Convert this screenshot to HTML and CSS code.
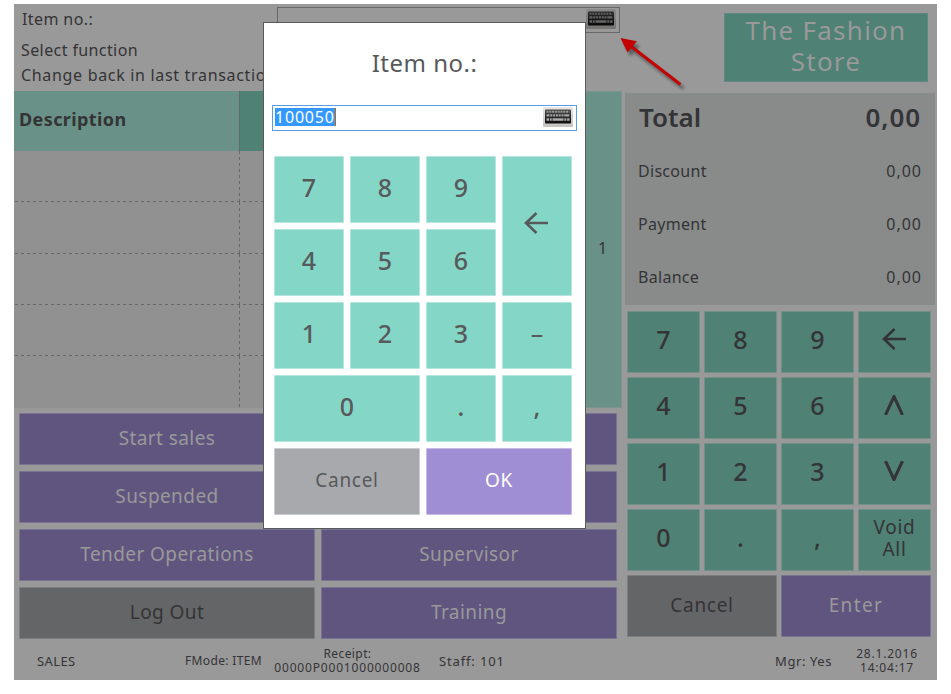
FILE: index.html
```
<!DOCTYPE html>
<html lang="en">
<head>
<meta charset="utf-8">
<title>POS</title>
<link rel="stylesheet" href="styles.css">
</head>
<body>
<svg class="defs" width="0" height="0">
  <defs>
    <linearGradient id="plate" x1="0" y1="0" x2="0" y2="1"><stop offset="0" stop-color="#e6e5e3"/><stop offset="1" stop-color="#c4c2bf"/></linearGradient>
    <linearGradient id="deck" x1="0" y1="0" x2="0" y2="1"><stop offset="0" stop-color="#4a4a4a"/><stop offset="1" stop-color="#0c0c0c"/></linearGradient>
    <symbol id="keyboard" viewBox="0 0 30 20">
      <rect width="30" height="20" rx="1.5" fill="url(#plate)"/>
      <rect x="2" y="2.500" width="26" height="14" rx="1" fill="url(#deck)"/>
      <path d="M3.500 4.700h23" stroke="#9a9a9a" stroke-width="2" stroke-dasharray="2 .8"/>
      <path d="M3.500 8.400h23" stroke="#a4a4a4" stroke-width="2.200" stroke-dasharray="3 .8 2 .8 2 .8 2 .8 2 .8 2 .8 5"/>
      <path d="M3.500 12.500h23" stroke="#a9a9a9" stroke-width="2.400" stroke-dasharray="2.600 .8 1.800 .8 11 .8 2 .8 3"/>
    </symbol>
  </defs>
</svg>
<div class="app">
  <div class="main">
    <section class="left">
      <header class="prompt">
        <div class="entry"><span class="entry-label">Item no.:</span><span class="entry-field"><svg class="kb"><use href="#keyboard"/></svg></span></div>
        <div class="msg">Select function</div>
        <div class="msg second">Change back in last transaction</div>
      </header>
      <div class="journal">
        <div class="table">
          <div class="thead"><div class="th">Description</div><div class="th dark"></div></div>
          <div class="row"><i></i></div><div class="row"><i></i></div><div class="row"><i></i></div><div class="row"><i></i></div><div class="row"><i></i></div>
        </div>
        <div class="scroll">1</div>
      </div>
      <div class="menu">
        <div class="btn purple">Start sales</div><div class="btn purple"></div>
        <div class="btn purple">Suspended</div><div class="btn purple"></div>
        <div class="btn purple">Tender Operations</div><div class="btn purple">Supervisor</div>
        <div class="btn gray">Log Out</div><div class="btn purple">Training</div>
      </div>
    </section>
    <section class="right">
      <div class="brand-area"><div class="brand">The Fashion<br>Store</div></div>
      <div class="totals">
        <div class="total"><span>Total</span><span class="amount">0,00</span></div>
        <div class="line"><span>Discount</span><span class="amount">0,00</span></div>
        <div class="line"><span>Payment</span><span class="amount">0,00</span></div>
        <div class="line"><span>Balance</span><span class="amount">0,00</span></div>
      </div>
      <div class="pad">
        <div class="btn key">7</div><div class="btn key">8</div><div class="btn key">9</div>
        <div class="btn key"><svg class="arrow" viewBox="0 0 24 22"><path d="M24 11H2M12.500 1L2 11l10.500 10"/></svg></div>
        <div class="btn key">4</div><div class="btn key">5</div><div class="btn key">6</div>
        <div class="btn key"><svg class="caret" viewBox="0 0 20 20"><path d="M1.500 20L10 1.500 18.500 20"/></svg></div>
        <div class="btn key">1</div><div class="btn key">2</div><div class="btn key">3</div>
        <div class="btn key"><svg class="caret" viewBox="0 0 20 20"><path d="M1.500 0L10 18.500 18.500 0"/></svg></div>
        <div class="btn key">0</div><div class="btn key">.</div><div class="btn key">,</div>
        <div class="btn key void">Void<br>All</div>
        <div class="btn gray wide cancel">Cancel</div><div class="btn purple wide enter">Enter</div>
      </div>
    </section>
  </div>
  <footer class="status">
    <span class="s-sales">SALES</span>
    <span class="s-mode">FMode: ITEM</span>
    <span class="s-receipt">Receipt:<br><b>00000P0001000000008</b></span>
    <span class="s-staff">Staff: 101</span>
    <span class="s-mgr">Mgr: Yes</span>
    <span class="s-time">28.1.2016<br>14:04:17</span>
  </footer>
</div>

<svg class="pointer" viewBox="0 0 76 62">
  <g class="pointer-shadow"><path class="shaft" d="M14 14L64.500 52.500"/><path d="M4.500 6L21 9.200 11.500 20.500z"/></g>
  <g class="pointer-body"><path class="shaft" d="M12 12L64.500 52.500"/><path d="M4.500 6L21 9.200 11.500 20.500z"/></g>
</svg>

<div class="dialog">
  <div class="dialog-title">Item no.:</div>
  <div class="dialog-input"><span class="value">100050</span><svg class="kb"><use href="#keyboard"/></svg></div>
  <div class="dialog-pad">
    <div class="btn key">7</div><div class="btn key">8</div><div class="btn key">9</div>
    <div class="btn key tall"><svg class="arrow" viewBox="0 0 24 22"><path d="M24 11H2M12.500 1L2 11l10.500 10"/></svg></div>
    <div class="btn key">4</div><div class="btn key">5</div><div class="btn key">6</div>
    <div class="btn key">1</div><div class="btn key">2</div><div class="btn key">3</div><div class="btn key minus">–</div>
    <div class="btn key wide">0</div><div class="btn key">.</div><div class="btn key">,</div>
    <div class="btn gray wide">Cancel</div><div class="btn purple wide ok">OK</div>
  </div>
</div>
</body>
</html>
```
FILE: styles.css
```
* { box-sizing: border-box; }
body { margin: 0; width: 951px; height: 694px; background: #fff; overflow: hidden; font-family: "Noto Sans", "Open Sans", sans-serif; font-size: 16px; color: #343436; }
.defs { position: absolute; }
.app { margin: 4px 0 0 14px; width: 923px; height: 676px; background: #999; display: flex; flex-direction: column; }
.main { display: flex; height: 636px; }
.left { width: 611px; display: flex; flex-direction: column; }
.right { width: 310px; display: flex; flex-direction: column; }

.prompt { height: 87px; white-space: nowrap; letter-spacing: .4px; }
.entry { display: flex; padding: 3px 0 0 8px; height: 34px; line-height: 24px; }
.entry-label { width: 255px; }
.entry-field { width: 343px; height: 26px; border: 1px solid #68686a; display: flex; justify-content: flex-end; padding: 1px 3px; }
.kb { width: 30px; height: 20px; display: block; }
.entry-field .kb { filter: brightness(.6); }
.msg { padding-left: 7px; line-height: 25px; height: 25px; }
.msg.second { letter-spacing: .680px; }

.journal { display: flex; height: 317px; width: 608px; }
.table { width: 571px; background: #919191; display: flex; flex-direction: column; }
.thead { height: 60px; display: flex; }
.th { width: 225px; background: #699188; font-size: 18px; font-weight: 700; letter-spacing: .4px; padding: 0 0 4px 5px; display: flex; align-items: center; }
.th.dark { flex: 1; width: auto; background: #4f8175; border-left: 1px solid #68686a; }
.row { height: 51.300px; background: repeating-linear-gradient(90deg, transparent 0 1px, #68686a 1px 4px, transparent 4px 6px) bottom / 100% 1px no-repeat; }
.row:last-child { background: none; }
.row i { display: block; margin-left: 225px; width: 1px; height: 100%; background: repeating-linear-gradient(#68686a 0 3px, transparent 3px 6px); }
.scroll { flex: 1; background: #699188; border: solid #7b958e; border-width: 1px 1px 1px 0; display: flex; align-items: center; justify-content: center; padding: 0 1px 3px 0; }

.btn { border: 1px solid; border-radius: 1px; display: flex; align-items: center; justify-content: center; text-align: center; padding-bottom: 4px; white-space: nowrap; font-size: 19px; letter-spacing: .7px; }
.app .purple { background: #60557f; border-color: #797292; color: #999; }
.app .gray { background: #646567; border-color: #7c7d7e; }
.app .key { background: #4f8175; border-color: #729087; }
.btn.key { font-size: 25px; font-weight: 500; letter-spacing: 0; padding-bottom: 6px; }
.menu { display: grid; grid-template-columns: 296px 296px; grid-auto-rows: 52px; gap: 6px; padding: 5px 0 0 5px; }
.menu .btn { letter-spacing: .420px; padding-bottom: 2px; }

.brand-area { height: 89px; padding: 9px 0 0 99px; }
.brand { width: 204px; height: 69px; background: #4f8175; border: 1px solid #5f897f; color: #999; font-size: 26px; line-height: 31px; letter-spacing: 1.250px; text-align: center; padding-top: 1px; }
.totals { height: 212px; background: #898b8a; padding: 0 14px 0 13px; }
.total, .line { display: flex; justify-content: space-between; align-items: center; }
.total { height: 52px; font-size: 26px; font-weight: 600; padding: 0 0 4px 1px; }
.total .amount { letter-spacing: .9px; }
.line { height: 53px; letter-spacing: .3px; padding-bottom: 2px; }
.line .amount { letter-spacing: 1px; margin-right: -1px; }
.pad { display: grid; grid-template-columns: repeat(4, 73px); grid-auto-rows: 62px; gap: 4px; padding: 6px 0 0 2px; }
.wide { grid-column: span 2; }
.tall { grid-row: span 2; }
.arrow { width: 24px; height: 22px; margin-right: 2px; }
.caret { width: 20px; height: 20px; margin-right: 2px; }
.arrow path, .caret path { fill: none; stroke: currentColor; stroke-width: 2.600; }
.caret path { stroke-width: 3; }
.btn.void { font-size: 19px; font-weight: 400; line-height: 22px; letter-spacing: .7px; padding-bottom: 4px; }
.btn.cancel { padding-bottom: 2px; }
.btn.enter { padding-bottom: 2px; letter-spacing: 1.400px; }

.status { height: 40px; display: flex; align-items: center; font-size: 12px; line-height: 14px; letter-spacing: .4px; white-space: nowrap; padding-left: 23px; }
.status span { flex: none; padding-top: 2px; }
.status b { font-weight: 400; letter-spacing: .820px; margin: 0 -5px; }
.s-sales { width: 148px; font-size: 13px; }
.s-mode { width: 89px; letter-spacing: .350px; }
.s-receipt { width: 147px; text-align: center; }
.status .s-staff { width: 336px; padding-left: 18px; font-size: 13px; letter-spacing: .850px; }
.status .s-mgr { width: 80px; padding-left: 18px; font-size: 13px; letter-spacing: .6px; }
.s-time { width: 100px; text-align: center; letter-spacing: .8px; }

.pointer { position: absolute; left: 616px; top: 32px; width: 76px; height: 62px; }
.pointer .shaft { fill: none; stroke-width: 2.900; }
.pointer-body { fill: #c40000; stroke: #c40000; stroke-width: 0; }
.pointer-shadow { fill: #444; stroke: #444; stroke-width: 0; transform: translate(3px, 4px); filter: blur(1.500px); opacity: .7; }

.dialog { position: absolute; left: 263px; top: 22px; width: 323px; height: 507px; background: #fff; border: 1px solid #58595b; padding: 0 8px; color: #58595b; }
.dialog-title { height: 82px; line-height: 80px; text-align: center; font-size: 24px; letter-spacing: .5px; }
.dialog-input { width: 305px; height: 26px; border: 1px solid #569de5; display: flex; justify-content: space-between; align-items: flex-start; padding: 1px 3px 0 2px; }
.value { margin-top: 1px; height: 18px; line-height: 18px; background: #39f; color: #fff; border-right: 1px solid #c60; letter-spacing: .8px; }
.dialog-pad { display: grid; grid-template-columns: repeat(4, 70px); grid-auto-rows: 67px; gap: 6px; padding: 25px 0 0 2px; }
.dialog .key { background: #84d6c6; border-color: #b5e6dd; }
.dialog .gray { background: #a7a9ac; border-color: #cacbcd; }
.dialog .purple { background: #a08ed4; border-color: #c6bbe5; color: #fff; }
.dialog .minus { font-weight: 400; }
```
